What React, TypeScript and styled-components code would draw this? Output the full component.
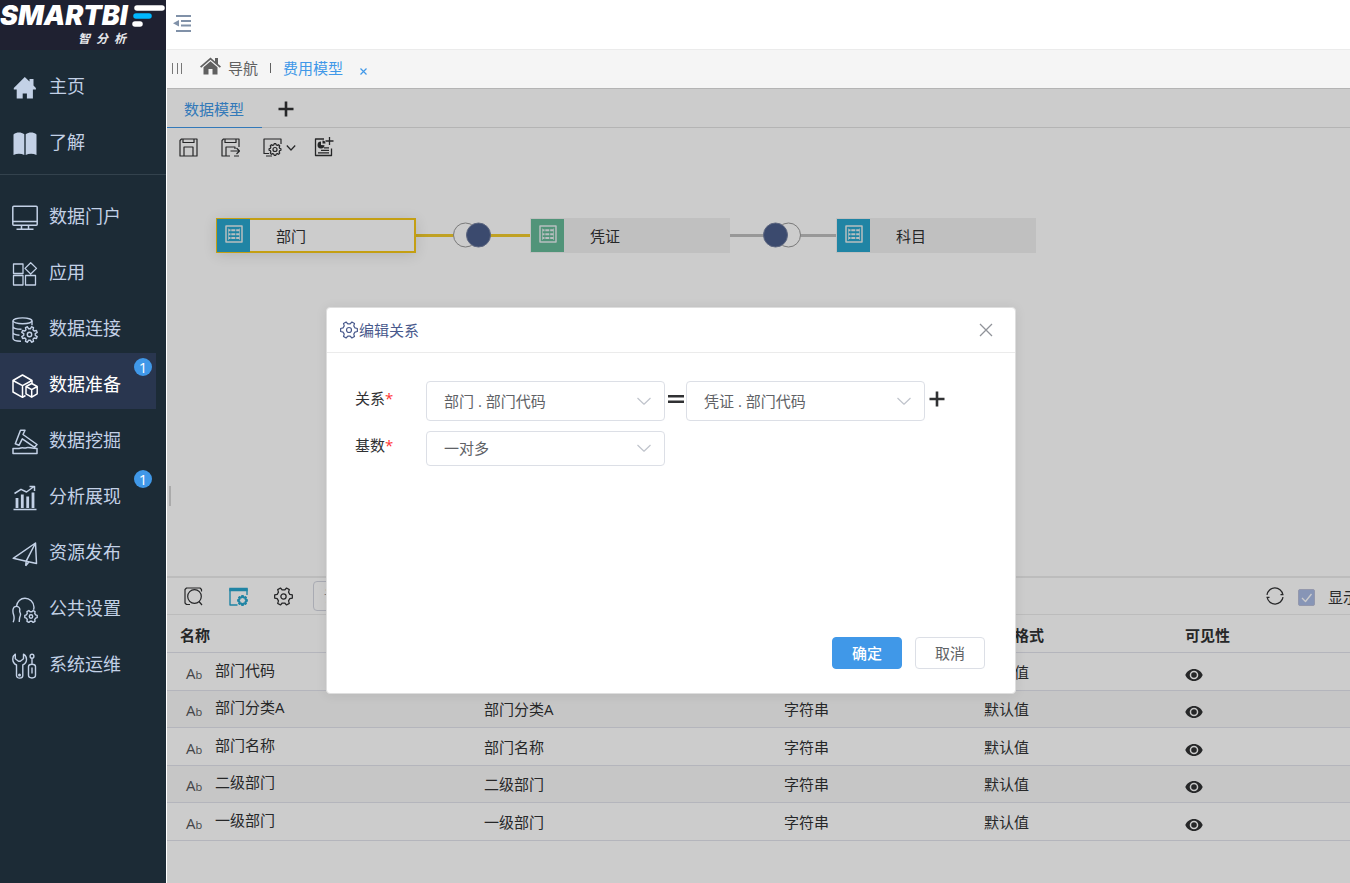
import React from "react";
import styled, { createGlobalStyle, css } from "styled-components";

const GlobalStyle = createGlobalStyle`
  *, *::before, *::after { box-sizing: border-box; }
  body {
    margin: 0;
    background: #fff;
    color: #303133;
    font-family: "Open Sans", "Noto Sans CJK SC", sans-serif;
    font-size: 15px;
    line-height: 20px;
    overflow-x: hidden;
  }
  button, input, select { font: inherit; color: inherit; }
  button { border: 0; background: none; padding: 0; cursor: pointer; }
  a { color: inherit; text-decoration: none; }
  svg { display: block; flex: none; }
`;

/* ---------- drawing helpers ---------- */

/** Outline of a cog wheel with trapezoid teeth. */
function cog(cx: number, cy: number, outer: number, inner: number, teeth: number, start = 0) {
  const step = (Math.PI * 2) / teeth;
  const at = (r: number, a: number) =>
    `${(cx + r * Math.cos(a)).toFixed(2)} ${(cy + r * Math.sin(a)).toFixed(2)}`;
  const points: string[] = [];
  for (let i = 0; i < teeth; i++) {
    const a = start + i * step;
    points.push(
      at(inner, a - step * 0.32),
      at(outer, a - step * 0.17),
      at(outer, a + step * 0.17),
      at(inner, a + step * 0.32)
    );
  }
  return `M${points.join("L")}Z`;
}

type IconProps = { size?: number; box?: number; width?: number; children: React.ReactNode };

const Icon = ({ size = 26, box = size, width = 1.5, children }: IconProps) => (
  <svg
    width={size}
    height={size}
    viewBox={`0 0 ${box} ${box}`}
    fill="none"
    stroke="currentColor"
    strokeWidth={width}
    strokeLinejoin="round"
    aria-hidden="true"
  >
    {children}
  </svg>
);

const LobedCog = ({ size }: { size: number }) => (
  <Icon size={size} box={18} width={1.2}>
    <path d={cog(9, 9, 8.5, 6.3, 6)} />
    <circle cx="9" cy="9" r="2.5" />
  </Icon>
);

const Chevron = () => (
  <Icon size={16} width={1.2}>
    <path d="M1.5 5 8 11.2 14.5 5" />
  </Icon>
);

const Plus = () => (
  <Icon size={16} width={2.6}>
    <path d="M8 0.5v15M0.5 8h15" />
  </Icon>
);

const navIcons = {
  home: (
    <Icon width={0}>
      <path
        fill="currentColor"
        d="M12.800 2 1.800 13v1.500h2.900V23.500h6v-5h4.200v5h6v-9h3v-1.500l-2.400-2.400V4h-4v2.600z"
      />
    </Icon>
  ),
  book: (
    <Icon width={0}>
      <path
        fill="currentColor"
        d="M1.5 3.5C4.5 1 9 1 12.3 3.2V24C9 22.4 5 22.4 1.5 24zM13.7 3.2C17 1 21.5 1 24.5 3.5V24C21 22.4 17 22.4 13.7 24z"
      />
    </Icon>
  ),
  monitor: (
    <Icon>
      <rect x="0.8" y="1.200" width="24.400" height="19" rx="1" />
      <path d="M1 16.500h24M9.500 20.500v3M16.500 20.500v3M4.500 24.300h17" />
    </Icon>
  ),
  apps: (
    <Icon width={1.3}>
      <path d="M1.500 3h9.500v9.500h-9.500zM1.500 14.500h9.500v9.500h-9.500zM13.500 14.500h10v9.500h-10zM18.700 1.800l5.800 5.600-5.800 5.600-5.700-5.600z" />
    </Icon>
  ),
  database: (
    <Icon width={1.4}>
      <ellipse cx="10.500" cy="3.800" rx="9.500" ry="2.900" />
      <path d="M1 3.800v17.500c0 1.600 3 2.900 8 3M20 3.800v4.500M1 9.500c0 1.500 3.500 2.700 8.500 2.800M1 15.500c0 1.400 2.600 2.500 6.500 2.700" />
      <path d={cog(17.5, 17.5, 8, 5.8, 8, 0.39)} />
      <circle cx="17.500" cy="17.500" r="2.200" />
    </Icon>
  ),
  boxes: (
    <Icon>
      <path d="M13.500 22.500 10.500 24.300 1 19V7.500L10.500 2 20 7.500v3M1 7.500l9.500 5.200L20 7.500M10.500 12.700v11.600" />
      <path d="M14 13.500l5.700-3 5.500 3v7.300l-5.500 3.400-5.700-3.400zM14 13.500l5.700 3.200 5.500-3.200M19.700 16.700v7.500" />
    </Icon>
  ),
  gavel: (
    <Icon>
      <path d="M8.500 1.200h4.500l-2 4.300 14 10-2.300 2.800-12.400-8.500-3.300 6.500-3.700-1.500z" />
      <path d="M1 19.500h6c4-1.500 5 0 7.500-.8s4.500.8 10.500.8v5h-24z" />
    </Icon>
  ),
  chart: (
    <Icon>
      <path d="M1.500 24.500h23M2.500 8.500l6.500-4.200 5.500 2.700 7.500-5.500M17.500 1.500h5v4.500" />
      <path strokeWidth="2.800" d="M5 13v10M10.300 9.500v13.500M15.700 11.500v11.500M21 7.500v15.500" />
    </Icon>
  ),
  plane: (
    <Icon>
      <path d="M1.200 17.300 23.500 2l1 20.500-10.300-2.300zM23.500 2 14.200 20.200l-.5 4.600M13.700 24.800l3.300-4" />
    </Icon>
  ),
  service: (
    <Icon width={1.4}>
      <path d="M1.200 25.300c1.300-3 1-5.500.4-7.500C.2 13.500 1 9.800 3.500 9.500c3-.5 4.800 1.500 4.200 4-.5 2.200 1.600 2.500.6 5-1.100 2.500-1 4-1 6.500" />
      <path d="M4.500 9.300C5 4.500 8.500 1.200 13 1.200s9 4 9 9c0 1-.2 1.700-.5 2.500" />
      <path d={cog(19, 19.5, 6.3, 4.9, 6)} />
      <circle cx="19" cy="19.500" r="1.700" />
    </Icon>
  ),
  tools: (
    <Icon width={1.4}>
      <path d="M3.300 1.200v4.600l3.200 2.400h1.800l3.200-2.400V1.200c4 2.200 4.300 8.600-.7 10.800v10.500c0 3.500-6.300 3.500-6.300 0V12C-.3 9.800-.2 3.500 3.300 1.200z" />
      <circle cx="7.500" cy="22" r=".8" />
      <path d="M16.500 13.500c0-1.500 1-2.200 3.500-2.200s3.500.7 3.500 2.200v8.800c0 3.500-7 3.500-7 0zM20 11.300V5M20 14.500v6" />
      <circle cx="20" cy="3.200" r="1.900" />
    </Icon>
  ),
};

/* ---------- page shell ---------- */

const Shell = styled.div`
  display: grid;
  grid-template-columns: 167px minmax(0, 1fr);
  min-height: 100vh;
`;

const Sidebar = styled.aside`
  border-right: 1px solid #fff;
  background: #1c2b36;
  color: #c3d1e6;
`;

const Logo = styled.a`
  display: flex;
  flex-direction: column;
  height: 50px;
  overflow: hidden;
  background: #1f2131;
  color: #fff;
  font-family: Inter, "Noto Sans CJK SC", sans-serif;
`;

const LogoTop = styled.span`
  display: flex;
  align-items: center;
  gap: 3px;
  height: 32px;
`;

const LogoWord = styled.span`
  font-size: 27px;
  line-height: 32px;
  font-style: italic;
  font-weight: 900;
  width: 128px;
`;

const LogoSub = styled.span`
  display: flex;
  gap: 6px;
  padding-left: 78px;
  color: #e6e7ea;
  font-size: 12px;
  line-height: 13px;
  font-style: italic;
  font-weight: 700;
`;

const NavGroup = styled.nav<{ $divided?: boolean }>`
  padding-top: 5px;
  ${(p) =>
    p.$divided &&
    css`
      margin-top: 7px;
      padding-top: 10px;
      border-top: 1px solid #33424d;
    `}
`;

const NavItem = styled.a<{ $active?: boolean }>`
  position: relative;
  display: flex;
  align-items: center;
  gap: 11px;
  height: 56px;
  margin-right: 10px;
  padding: 10px 0 0 12px;
  font-size: 18px;
  line-height: 24px;
  color: ${(p) => (p.$active ? "#fff" : "inherit")};
  background: ${(p) => (p.$active ? "#29364f" : "transparent")};
`;

const NavText = styled.span`
  padding-bottom: 4px;
`;

const Badge = styled.span`
  position: absolute;
  top: 5px;
  right: 4px;
  width: 18px;
  height: 18px;
  border-radius: 9px;
  background: #4098e8;
  color: #fff;
  font-size: 15px;
  line-height: 18px;
  text-align: center;
`;

const Main = styled.main`
  display: flex;
  flex-direction: column;
  min-width: 0;
`;

const TopBar = styled.header`
  display: flex;
  align-items: center;
  height: 49px;
  padding: 0 0 3px 6px;
  color: #8091a8;
`;

const PageTabs = styled.nav`
  display: flex;
  align-items: center;
  height: 39px;
  padding: 0 0 2px 5px;
  border-top: 1px solid #ebebeb;
  background: #f5f5f5;
  color: #606060;
`;

const Grip = styled.span`
  width: 10px;
  height: 11px;
  margin-right: 18px;
  border: solid #777;
  border-width: 0 1px;
  background: linear-gradient(#777, #777) center / 1px 100% no-repeat;
`;

const PageTab = styled.a<{ $active?: boolean }>`
  display: flex;
  align-items: center;
  gap: 7px;
  color: ${(p) => (p.$active ? "#4098e8" : "inherit")};
  & > svg { margin-bottom: 4px; }
`;

const PageTabDivider = styled.span`
  width: 1px;
  height: 10px;
  margin: 0 12px;
  background: #606060;
`;

const PageTabClose = styled.button`
  margin: 7px 0 0 17px;
  color: #4098e8;
`;

/* ---------- workspace ---------- */

const Workspace = styled.section`
  position: relative;
  display: flex;
  flex: 1;
  flex-direction: column;
  overflow: hidden;
`;

const ModelTabs = styled.div`
  display: flex;
  height: 40px;
  border-top: 1px solid #e2e2e2;
  border-bottom: 1px solid #e2e2e2;
`;

const ModelTab = styled.button`
  height: 39px;
  padding: 2px 18px 0 17px;
  border-bottom: 1px solid #4098e8;
  color: #4098e8;
`;

const AddTab = styled.button`
  padding: 2px 0 0 16px;
`;

const Tools = styled.div`
  display: flex;
  align-items: center;
  gap: 18px;
  height: 38px;
  padding-left: 12px;
`;

const ToolButton = styled.button<{ $menu?: boolean }>`
  display: flex;
  align-items: center;
  gap: 4px;
  padding-right: ${(p) => (p.$menu ? 0 : 5)}px;
`;

const Canvas = styled.div`
  position: relative;
  flex: 1;
  min-height: 240px;
`;

const Node = styled.div<{ $x: number; $selected?: boolean }>`
  position: absolute;
  top: 52px;
  left: ${(p) => p.$x}px;
  display: flex;
  align-items: center;
  gap: 26px;
  width: 200px;
  height: 35px;
  padding-left: 1px;
  background: #f0f0f0;
  ${(p) =>
    p.$selected &&
    css`
      background: #fff;
      box-shadow: inset 0 0 0 2px #f5c718, 0 2px 14px rgba(0, 0, 0, 0.12);
    `}
`;

const NodeIcon = styled.span<{ $color: string }>`
  display: flex;
  align-items: center;
  justify-content: center;
  width: 33px;
  height: 33px;
  padding-bottom: 4px;
  background: ${(p) => p.$color};
  color: #e6eef0;
`;

const Link = styled.div<{ $x: number; $width: number; $color: string }>`
  position: absolute;
  top: 52px;
  left: ${(p) => p.$x}px;
  display: flex;
  align-items: center;
  justify-content: center;
  width: ${(p) => p.$width}px;
  height: 35px;
  padding: 0 3px 1px 0;
  background: linear-gradient(${(p) => p.$color}, ${(p) => p.$color}) center / 100% 3px no-repeat;
`;

const Splitter = styled.span`
  position: absolute;
  bottom: 70px;
  left: 2px;
  width: 2px;
  height: 20px;
  background: #d5d5d5;
`;

const Panel = styled.section`
  min-height: 307px;
  border-top: 2px solid #ebebeb;
`;

const PanelBar = styled.div`
  display: flex;
  align-items: center;
  height: 37px;
  padding-left: 17px;
  border-bottom: 1px solid #ebebeb;
`;

const PanelButtons = styled.div`
  display: flex;
  gap: 21px;
  margin-right: 15px;
`;

const Search = styled.input`
  width: 220px;
  height: 30px;
  padding: 0 10px;
  border: 1px solid #d4d6e0;
  border-radius: 4px;
  background: transparent;
  &::placeholder { color: #a0a2a8; opacity: 1; }
`;

const PanelOptions = styled.div`
  display: flex;
  align-items: center;
  gap: 9px;
  width: 84px;
  margin-left: auto;
  white-space: nowrap;
`;

const CheckLabel = styled.label`
  display: flex;
  align-items: center;
  gap: 13px;
  padding-top: 2px;
`;

const CheckBox = styled.span`
  display: grid;
  & > * { grid-area: 1 / 1; }
  & > svg { pointer-events: none; color: #fff; }
  & > input {
    appearance: none;
    width: 17px;
    height: 17px;
    margin: 0;
    border: 1px solid #b9bed8;
    border-radius: 2px;
    background: #a9bbe4;
  }
`;

const FieldTable = styled.table`
  width: 100%;
  table-layout: fixed;
  border-collapse: separate;
  border-spacing: 0;
  text-align: left;
`;

const HeadCell = styled.th<{ $width?: number }>`
  width: ${(p) => (p.$width ? `${p.$width}px` : "auto")};
  height: 38px;
  padding: 3px 0 0 13px;
  border-bottom: 1px solid #e2e3ec;
  font-weight: 700;
`;

const FieldRow = styled.tr`
  height: 38px;
  &:nth-child(even) {
    height: 37px;
    background: #f8f8f8;
  }
`;

const Cell = styled.td`
  padding: 0 0 0 13px;
  border-bottom: 1px solid #e2e3ec;
`;

const NameCell = styled(Cell)`
  padding: 1px 0 0 19px;
`;

const FieldName = styled.span`
  display: flex;
  gap: 14px;
`;

const TypeMark = styled.span`
  width: 15px;
  padding-top: 3px;
  color: #55575a;
  font-size: 15px;
  & > small { font-size: 11px; }
`;

const EyeButton = styled.button`
  display: block;
  padding-top: 6px;
`;

/* ---------- dialog ---------- */

const Overlay = styled.div`
  position: absolute;
  inset: 0;
  display: flex;
  align-items: center;
  justify-content: center;
  padding: 29px 175px 0 0;
  background: rgba(0, 0, 0, 0.2);
`;

const Dialog = styled.div`
  display: flex;
  flex-direction: column;
  width: 690px;
  min-height: 387px;
  border: 1px solid #dedede;
  border-radius: 4px;
  background: #fff;
  box-shadow: 0 1px 12px rgba(0, 0, 0, 0.08);
`;

const DialogHead = styled.header`
  display: flex;
  align-items: center;
  justify-content: space-between;
  height: 45px;
  padding: 0 22px 0 13px;
  border-bottom: 1px solid #ebebeb;
  color: #909399;
`;

const DialogTitle = styled.h2`
  display: flex;
  align-items: center;
  gap: 1px;
  margin: 0;
  font-size: 15px;
  font-weight: 400;
  color: #48598c;
`;

const Form = styled.form`
  display: flex;
  flex: 1;
  flex-direction: column;
  padding: 28px 30px 24px 28px;
`;

const FormRow = styled.div`
  display: flex;
  align-items: center;
  margin-bottom: 10px;
`;

const FieldLabel = styled.label`
  width: 71px;
  padding-bottom: 6px;
  & > span { color: #f33; }
`;

const SelectBox = styled.span<{ $tall?: boolean }>`
  display: grid;
  align-items: center;
  width: 239px;
  height: ${(p) => (p.$tall ? 40 : 35)}px;
  & > * { grid-area: 1 / 1; }
  & > svg {
    justify-self: end;
    margin-right: 13px;
    color: #c0c4cc;
    pointer-events: none;
  }
  & > select {
    appearance: none;
    width: 100%;
    height: 100%;
    padding: 0 36px 0 17px;
    border: 1px solid #dcdfe6;
    border-radius: 4px;
    background: #fff;
    color: #606266;
  }
`;

const Joiner = styled.span`
  display: flex;
  justify-content: center;
  width: 21px;
  padding-bottom: 4px;
`;

const AddCondition = styled.button`
  padding: 0 0 3px 4px;
`;

const DialogActions = styled.div`
  display: flex;
  justify-content: flex-end;
  gap: 13px;
  margin-top: auto;
`;

const ActionButton = styled.button<{ $primary?: boolean }>`
  width: 70px;
  height: 32px;
  border: 1px solid ${(p) => (p.$primary ? "#4098e8" : "#dcdfe6")};
  border-radius: 4px;
  background: ${(p) => (p.$primary ? "#4098e8" : "#fff")};
  color: ${(p) => (p.$primary ? "#fff" : "#606266")};
  font-weight: ${(p) => (p.$primary ? 500 : 400)};
`;

/* ---------- pieces ---------- */

type NavEntry = { icon: keyof typeof navIcons; text: string; active?: boolean; badge?: number };

const mainNav: NavEntry[] = [
  { icon: "home", text: "主页" },
  { icon: "book", text: "了解" },
];

const moduleNav: NavEntry[] = [
  { icon: "monitor", text: "数据门户" },
  { icon: "apps", text: "应用" },
  { icon: "database", text: "数据连接" },
  { icon: "boxes", text: "数据准备", active: true, badge: 1 },
  { icon: "gavel", text: "数据挖掘" },
  { icon: "chart", text: "分析展现", badge: 1 },
  { icon: "plane", text: "资源发布" },
  { icon: "service", text: "公共设置" },
  { icon: "tools", text: "系统运维" },
];

const NavLinks = ({ items }: { items: NavEntry[] }) => (
  <>
    {items.map((item) => (
      <NavItem key={item.text} href="#" $active={item.active}>
        {navIcons[item.icon]}
        <NavText>{item.text}</NavText>
        {item.badge && <Badge>{item.badge}</Badge>}
      </NavItem>
    ))}
  </>
);

const TableGlyph = () => (
  <Icon size={18} width={1.5}>
    <rect x="1" y="1" width="16" height="16" />
    <path
      strokeWidth="2"
      d="M3.500 5.300h2M6.300 5.300h4M11.200 5.300h3.300M3.500 9.200h2M6.300 9.200h4M11.200 9.200h3.300M3.500 13.100h2M6.300 13.100h4M11.200 13.100h3.300"
    />
    <path strokeWidth=".6" d="M3.500 3.500v11.500M14.500 3.500v11.500" />
  </Icon>
);

const JoinGlyph = ({ filled }: { filled: "left" | "right" }) => (
  <svg width="38" height="26" viewBox="0 0 38 26" aria-hidden="true">
    <circle cx={filled === "left" ? 25.5 : 12.5} cy="13" r="12" fill="#fff" stroke="#999" />
    <circle cx={filled === "left" ? 12.5 : 25.5} cy="13" r="12" fill="#4a5d8a" stroke="#7480a0" />
  </svg>
);

const EyeGlyph = () => (
  <Icon size={18} width={0}>
    <path
      fill="currentColor"
      fillRule="evenodd"
      d="M9 3C5 3 1.800 5.400.3 9 1.800 12.600 5 15 9 15s7.200-2.400 8.700-6C16.200 5.400 13 3 9 3zm0 10.300A4.300 4.300 0 1 1 9 4.700a4.300 4.300 0 0 1 0 8.600zM9 6.200a2.800 2.800 0 1 0 0 5.600 2.800 2.800 0 0 0 0-5.600z"
    />
  </Icon>
);

const fields = ["部门代码", "部门分类A", "部门名称", "二级部门", "一级部门"];

const Fields = () => (
  <FieldTable>
    <thead>
      <tr>
        <HeadCell $width={304}>名称</HeadCell>
        <HeadCell $width={300}>别名</HeadCell>
        <HeadCell $width={200}>数据类型</HeadCell>
        <HeadCell $width={201}>数据格式</HeadCell>
        <HeadCell>可见性</HeadCell>
      </tr>
    </thead>
    <tbody>
      {fields.map((name) => (
        <FieldRow key={name}>
          <NameCell>
            <FieldName>
              <TypeMark>
                A<small>b</small>
              </TypeMark>
              {name}
            </FieldName>
          </NameCell>
          <Cell>{name}</Cell>
          <Cell>字符串</Cell>
          <Cell>默认值</Cell>
          <Cell>
            <EyeButton aria-label="可见性">
              <EyeGlyph />
            </EyeButton>
          </Cell>
        </FieldRow>
      ))}
    </tbody>
  </FieldTable>
);

const Picker = ({ id, value, tall }: { id: string; value: string; tall?: boolean }) => (
  <SelectBox $tall={tall}>
    <select id={id} defaultValue={value} aria-label={value}>
      <option>{value}</option>
    </select>
    <Chevron />
  </SelectBox>
);

const RelationDialog = () => (
  <Overlay>
    <Dialog role="dialog" aria-labelledby="relation-title">
      <DialogHead>
        <DialogTitle id="relation-title">
          <LobedCog size={18} />
          编辑关系
        </DialogTitle>
        <button aria-label="关闭">
          <Icon size={14} width={1.3}>
            <path d="M1 1l12 12M13 1 1 13" />
          </Icon>
        </button>
      </DialogHead>
      <Form onSubmit={(e) => e.preventDefault()}>
        <FormRow>
          <FieldLabel htmlFor="left-field">
            关系<span>*</span>
          </FieldLabel>
          <Picker id="left-field" value="部门 . 部门代码" tall />
          <Joiner>
            <Icon size={16} width={2.6}>
              <path d="M0 5.200h16M0 10.800h16" />
            </Icon>
          </Joiner>
          <Picker id="right-field" value="凭证 . 部门代码" tall />
          <AddCondition type="button" aria-label="添加">
            <Plus />
          </AddCondition>
        </FormRow>
        <FormRow>
          <FieldLabel htmlFor="cardinality">
            基数<span>*</span>
          </FieldLabel>
          <Picker id="cardinality" value="一对多" />
        </FormRow>
        <DialogActions>
          <ActionButton $primary type="submit">
            确定
          </ActionButton>
          <ActionButton type="button">取消</ActionButton>
        </DialogActions>
      </Form>
    </Dialog>
  </Overlay>
);

export default function App() {
  return (
    <>
      <GlobalStyle />
      <Shell>
        <Sidebar>
          <Logo href="#">
            <LogoTop>
              <LogoWord>SMARTBI</LogoWord>
              <svg width="34" height="24" viewBox="0 0 34 24" aria-hidden="true">
                <path d="M6 4h25" stroke="#fff" strokeWidth="5.500" strokeLinecap="round" />
                <path d="M5 12h13" stroke="#00b8ff" strokeWidth="5.500" strokeLinecap="round" />
                <path d="M4 20h5" stroke="#fff" strokeWidth="5.500" strokeLinecap="round" />
              </svg>
            </LogoTop>
            <LogoSub>
              <span>智</span>
              <span>分</span>
              <span>析</span>
            </LogoSub>
          </Logo>
          <NavGroup>
            <NavLinks items={mainNav} />
          </NavGroup>
          <NavGroup $divided>
            <NavLinks items={moduleNav} />
          </NavGroup>
        </Sidebar>
        <Main>
          <TopBar>
            <button aria-label="收起菜单">
              <Icon size={18} width={2}>
                <path d="M3 2h15M8 7h10M8 11.500h10M3 17h15" />
                <path d="M0 9.300 6 6v6.600z" fill="currentColor" stroke="none" />
              </Icon>
            </button>
          </TopBar>
          <PageTabs>
            <Grip />
            <PageTab href="#">
              <svg width="21" height="18" viewBox="0 0 21 18" fill="currentColor" aria-hidden="true">
                <path d="M10.500.5 0 9.600l1.200 1.200 9.300-8 9.300 8L21 9.600l-3-2.700V1h-3v3.400z" />
                <path d="M10.500 4.200 3.500 10.200v7.300h5v-5.500h4v5.500h5v-7.300z" />
              </svg>
              导航
            </PageTab>
            <PageTabDivider />
            <PageTab href="#" $active>
              费用模型
            </PageTab>
            <PageTabClose aria-label="关闭">
              <Icon size={7} width={1.2}>
                <path d="M.5.500l6 6M6.500.500l-6 6" />
              </Icon>
            </PageTabClose>
          </PageTabs>
          <Workspace>
            <ModelTabs>
              <ModelTab>数据模型</ModelTab>
              <AddTab aria-label="新建">
                <Plus />
              </AddTab>
            </ModelTabs>
            <Tools>
              <ToolButton aria-label="保存">
                <Icon size={19} width={1.2}>
                  <path d="M2.500 1h15.500v17H1V2.500zM5 18V9h9v9M4 1v3.500h11V1" />
                </Icon>
              </ToolButton>
              <ToolButton aria-label="另存为">
                <Icon size={19} width={1.2}>
                  <path d="M9 18H1V2.500L2.500 1h15.500v8M5 18V9h9v2M4 1v3.500h11V1M9.500 13h8.500M15.500 10l3 3-3 3M13 18h5" />
                </Icon>
              </ToolButton>
              <ToolButton aria-label="模型设置" $menu>
                <Icon size={19} width={1.2}>
                  <path d="M6 15.500H1V1h17v5M3 18h6" />
                  <path d={cog(12, 11.5, 6, 4.8, 8)} />
                  <circle cx="12" cy="11.500" r="2" />
                </Icon>
                <Icon size={10} width={1.2}>
                  <path d="M.8 3.500 5 8l4.200-4.500" />
                </Icon>
              </ToolButton>
              <ToolButton aria-label="新建报表">
                <Icon size={20} width={1.3}>
                  <path d="M10 2H1.500v16.500h16v-7M4 15.800h11M7 13.300h8M10 10.800h5M15.500 0v8M11.500 4h8" />
                  <path d="M7 4.500a3.500 3.500 0 1 0 3.500 3.800L7 8zM8.500 3.500v3h3a3 3 0 0 0-3-3z" fill="currentColor" stroke="none" />
                </Icon>
              </ToolButton>
            </Tools>
            <Canvas>
              <Link $x={249} $width={114} $color="#f0ca2c">
                <JoinGlyph filled="right" />
              </Link>
              <Link $x={563} $width={106} $color="#bfbfbf">
                <JoinGlyph filled="left" />
              </Link>
              <Node $x={49} $selected>
                <NodeIcon $color="#28a6ce">
                  <TableGlyph />
                </NodeIcon>
                部门
              </Node>
              <Node $x={363}>
                <NodeIcon $color="#66ba98">
                  <TableGlyph />
                </NodeIcon>
                凭证
              </Node>
              <Node $x={669}>
                <NodeIcon $color="#28a6ce">
                  <TableGlyph />
                </NodeIcon>
                科目
              </Node>
              <Splitter />
            </Canvas>
            <Panel>
              <PanelBar>
                <PanelButtons>
                  <ToolButton aria-label="预览">
                    <Icon size={19} width={1.2}>
                      <path d="M6 17.500H2.500L1 16V2.500L2.500 1h13.500l1.500 1.500v2M15 14.500l3 3.500" />
                      <circle cx="10.500" cy="9.500" r="6.800" />
                    </Icon>
                  </ToolButton>
                  <ToolButton aria-label="字段设置">
                    <Icon size={19} width={1.4}>
                      <g stroke="#28a6ce">
                        <path d="M8.500 18h-7.500V2h17v6" />
                        <path d="M.3 2.500h18.400" strokeWidth="3.500" />
                        <path d={cog(13.5, 13.5, 4.6, 3.2, 8)} strokeWidth="1.700" />
                      </g>
                    </Icon>
                  </ToolButton>
                  <ToolButton aria-label="设置">
                    <LobedCog size={19} />
                  </ToolButton>
                </PanelButtons>
                <Search placeholder="请输入" aria-label="搜索" />
                <PanelOptions>
                  <ToolButton aria-label="刷新">
                    <Icon size={18} width={1.3}>
                      <path d="M1 7.800a8 8 0 0 1 15.800-.3M17 10.200a8 8 0 0 1-15.800.3M.5 10.300h3M17.500 7.700h-3" />
                    </Icon>
                  </ToolButton>
                  <CheckLabel>
                    <CheckBox>
                      <input type="checkbox" defaultChecked />
                      <Icon size={17} width={1.3}>
                        <path d="M4 9l3.500 3.500L13.500 5" />
                      </Icon>
                    </CheckBox>
                    显示隐藏字段
                  </CheckLabel>
                </PanelOptions>
              </PanelBar>
              <Fields />
            </Panel>
            <RelationDialog />
          </Workspace>
        </Main>
      </Shell>
    </>
  );
}
